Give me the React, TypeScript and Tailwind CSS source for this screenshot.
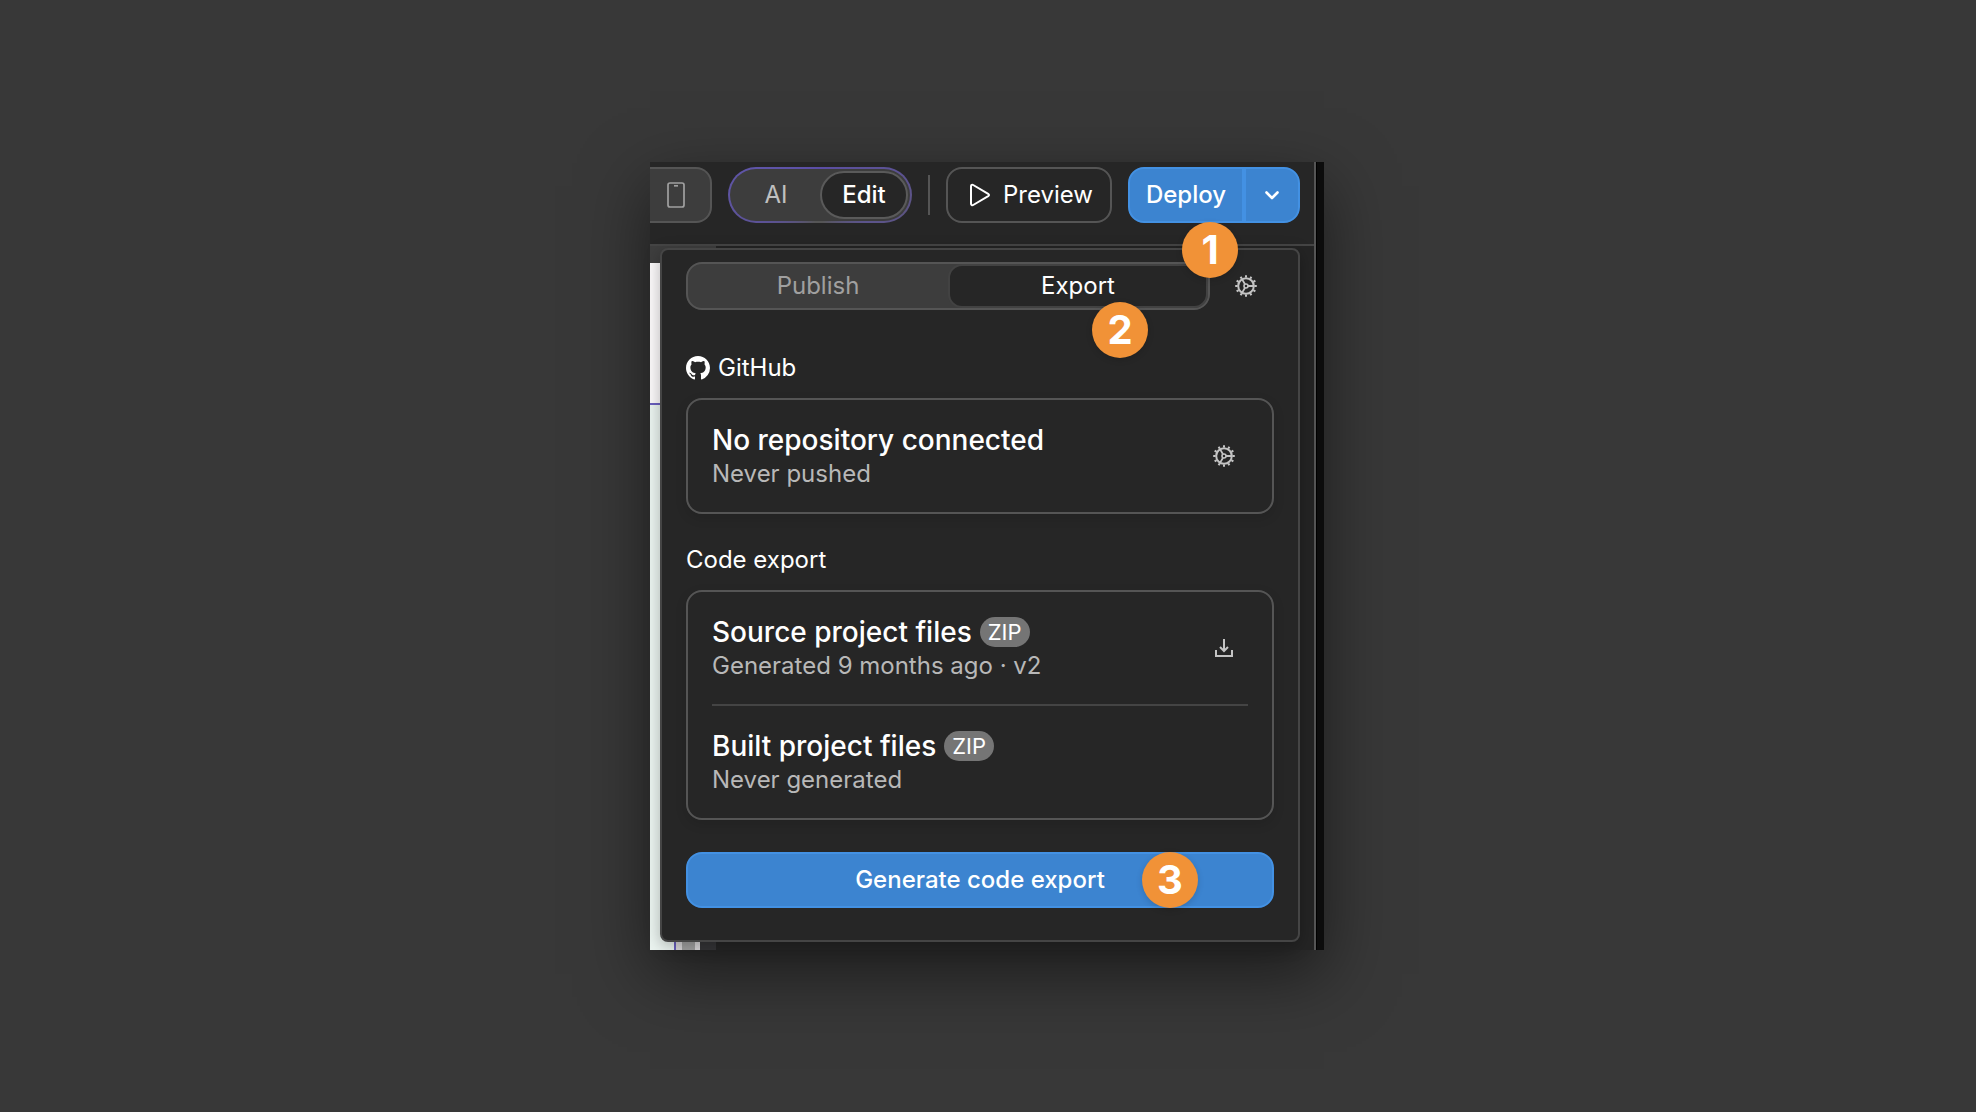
import React, { type ReactNode } from "react";

function GearIcon() {
  const teeth = [0, 30, 60, 90, 120, 150, 180, 210, 240, 270, 300, 330];
  return (
    <svg viewBox="0 0 22 22" className="size-[22px]" fill="none" stroke="currentColor" strokeWidth="2" aria-hidden="true">
      <circle cx="11" cy="11" r="7.8" />
      <circle cx="11" cy="11" r="2" strokeWidth="1.6" />
      <path d="M13 11H19M10 9.3L7 4.1M10 12.7L7 17.9" strokeWidth="1.8" />
      {teeth.map((angle) => (
        <path key={angle} d="M11 0.2V2.6" strokeWidth="2" transform={`rotate(${angle} 11 11)`} />
      ))}
    </svg>
  );
}

function DownloadIcon() {
  return (
    <svg viewBox="0 0 18 18" className="size-[18px]" fill="none" stroke="currentColor" strokeWidth="2" aria-hidden="true">
      <path d="M1 11V17H17V11" />
      <path d="M9 0V12M5 8L9 12L13 8" />
    </svg>
  );
}

function PhoneIcon() {
  return (
    <svg viewBox="0 0 18 26" className="h-[26px] w-[18px]" fill="none" stroke="currentColor" strokeWidth="1.7" aria-hidden="true">
      <rect x="1" y="1" width="16" height="24" rx="2" />
      <path d="M7 3.8H11" />
    </svg>
  );
}

function PlayIcon() {
  return (
    <svg viewBox="0 0 22 24" className="h-6 w-[22px]" fill="none" stroke="currentColor" strokeWidth="2" strokeLinejoin="round" aria-hidden="true">
      <path d="M2 3.2C2 1.9 3.2 1.4 4.2 2L19.2 10.8C20.3 11.5 20.3 12.5 19.2 13.2L4.2 22C3.2 22.6 2 22.1 2 20.8Z" />
    </svg>
  );
}

function ChevronIcon() {
  return (
    <svg viewBox="0 0 14 9" className="h-[9px] w-[14px]" fill="none" stroke="currentColor" strokeWidth="2.6" strokeLinecap="round" strokeLinejoin="round" aria-hidden="true">
      <path d="M1.5 1.5L7 7L12.5 1.5" />
    </svg>
  );
}

function GitHubIcon() {
  return (
    <svg viewBox="0 0 16 16" className="size-6" fill="currentColor" aria-hidden="true">
      <path d="M8 0C3.58 0 0 3.58 0 8c0 3.54 2.29 6.53 5.47 7.59.4.07.55-.17.55-.38 0-.19-.01-.82-.01-1.49-2.01.37-2.53-.49-2.69-.94-.09-.23-.48-.94-.82-1.13-.28-.15-.68-.52-.01-.53.63-.01 1.08.58 1.23.82.72 1.21 1.87.87 2.33.66.07-.52.28-.87.51-1.07-1.78-.2-3.64-.89-3.64-3.95 0-.87.31-1.59.82-2.15-.08-.2-.36-1.02.08-2.12 0 0 .67-.21 2.2.82.64-.18 1.32-.27 2-.27s1.36.09 2 .27c1.53-1.04 2.2-.82 2.2-.82.44 1.1.16 1.92.08 2.12.51.56.82 1.27.82 2.15 0 3.07-1.87 3.75-3.65 3.95.29.25.54.73.54 1.48 0 1.07-.01 1.93-.01 2.2 0 .21.15.46.55.38A8.01 8.01 0 0 0 16 8c0-4.42-3.58-8-8-8Z" />
    </svg>
  );
}

function StepBadge({ step, className }: { step: number; className: string }) {
  return (
    <span
      className={`absolute z-10 flex size-14 items-center justify-center rounded-full bg-[#f19237] text-[40px] leading-none font-bold text-white shadow-[0_2px_6px_rgba(0,0,0,0.15)] ${className}`}
    >
      {step}
    </span>
  );
}

function Toolbar() {
  return (
    <header className="flex items-start gap-4 border-b-2 border-[#454545] bg-[#262626] pt-[5px] pr-3.5 pb-[21px]">
      <button
        type="button"
        aria-label="Phone view"
        className="flex h-14 w-[62px] items-center rounded-r-2xl border-2 border-l-0 border-[#555] bg-[#3d3d3d] pl-[17px] text-[#a0a0a0]"
      >
        <PhoneIcon />
      </button>

      <div className="grid h-14 w-[184px] grid-cols-2 rounded-full border-2 border-transparent p-0.5 [background:linear-gradient(#3d3d3d,#3d3d3d)_padding-box,conic-gradient(#5b4da6,#5c5296_70deg,#5c5482_100deg,#5c548c_120deg,#555_175deg,#555_190deg,#5c5296_245deg,#5f55a8_290deg,#5b4da6)_border-box]">
        <button type="button" className="rounded-full text-[#c0c0c0]">AI</button>
        <button type="button" className="rounded-full border-2 border-[#5a5a5a] bg-[#262626] font-medium text-white">
          Edit
        </button>
      </div>

      <span className="mt-2 h-10 w-0.5 bg-[#555]" />

      <button
        type="button"
        className="flex h-14 w-[166px] items-center justify-center gap-3 rounded-2xl border-2 border-[#555] pl-1 text-white"
      >
        <PlayIcon />
        Preview
      </button>

      <div className="relative flex h-14 flex-1">
        <button
          type="button"
          className="flex-1 rounded-l-2xl border-2 border-[#4391e3] bg-[#3c84d0] font-medium text-white"
        >
          Deploy
        </button>
        <button
          type="button"
          aria-label="Deploy options"
          className="flex w-14 items-center justify-center rounded-r-2xl border-2 border-[#4391e3] bg-[#3c84d0] text-white"
        >
          <ChevronIcon />
        </button>
        <StepBadge step={1} className="top-[55px] left-[54px]" />
      </div>
    </header>
  );
}

function CanvasBackdrop() {
  return (
    <div className="absolute inset-0 flex flex-col bg-[#242424]" aria-hidden="true">
      <div className="h-[17px] w-[66px] bg-[#3e3e3e]" />
      <div className="h-[140px] w-[66px] bg-[#fbf9fa]" />
      <div className="h-0.5 w-[66px] bg-[#6a5fbe]" />
      <div className="flex w-[66px] flex-1 bg-[#ebf4f0]">
        <span className="w-6" />
        <span className="w-0.5 bg-[#6a5fbe]" />
        <span className="w-1.5 bg-[#d8d6d8]" />
        <span className="w-[13px] bg-[#a0a0a0]" />
        <span className="w-[5px] bg-[#d8d6d8]" />
        <span className="flex-1 bg-[#343436]" />
      </div>
    </div>
  );
}

function Card({ children }: { children: ReactNode }) {
  return (
    <div className="mt-3.5 rounded-2xl border-2 border-[#555] px-6 shadow-[0_4px_12px_rgba(0,0,0,0.12)]">{children}</div>
  );
}

function Row({
  title,
  detail,
  zip,
  action,
}: {
  title: string;
  detail: string;
  zip?: boolean;
  action?: ReactNode;
}) {
  return (
    <div className="flex h-28 items-center justify-between">
      <div>
        <h3 className="flex items-center gap-2 text-[28px] leading-9 font-medium text-white">
          {title}
          {zip && (
            <span className="rounded-full bg-[#757575] px-2 text-[22px] leading-[30px] font-normal">ZIP</span>
          )}
        </h3>
        <p className="text-[#b8b8b8]">{detail}</p>
      </div>
      {action}
    </div>
  );
}

function IconButton({ label, children }: { label: string; children: ReactNode }) {
  return (
    <button type="button" aria-label={label} className="flex size-12 items-center justify-center text-[#c4c4c4]">
      {children}
    </button>
  );
}

function ExportPopover() {
  return (
    <section className="relative mt-0.5 mr-3.5 mb-2 ml-2.5 rounded-lg border-2 border-[#454545] bg-[#262626] px-6 pt-3 pb-8 shadow-[0_4px_16px_rgba(0,0,0,0.28)]">
      <div className="flex items-center gap-3">
        <div className="relative grid h-12 flex-1 grid-cols-2 rounded-2xl border-2 border-[#555] bg-[#3d3d3d]">
          <button type="button" className="text-[#a0a0a0]">Publish</button>
          <button type="button" className="rounded-[14px] border-2 border-[#424242] bg-[#262626] text-white">
            Export
          </button>
          <StepBadge step={2} className="top-[38px] right-[60px]" />
        </div>
        <div className="mr-1">
          <IconButton label="Deploy settings">
            <GearIcon />
          </IconButton>
        </div>
      </div>

      <h2 className="mt-[42px] flex items-center gap-2 text-white">
        <GitHubIcon />
        GitHub
      </h2>
      <Card>
        <Row
          title="No repository connected"
          detail="Never pushed"
          action={
            <IconButton label="Repository settings">
              <GearIcon />
            </IconButton>
          }
        />
      </Card>

      <h2 className="mt-[30px] text-white">Code export</h2>
      <Card>
        <Row
          title="Source project files"
          detail="Generated 9 months ago · v2"
          zip
          action={
            <IconButton label="Download source">
              <DownloadIcon />
            </IconButton>
          }
        />
        <hr className="border-t-2 border-[#444]" />
        <Row title="Built project files" detail="Never generated" zip />
      </Card>

      <div className="relative mt-8">
        <button
          type="button"
          className="h-14 w-full rounded-2xl border-2 border-[#4391e3] bg-[#3c84d0] font-medium text-white"
        >
          Generate code export
        </button>
        <StepBadge step={3} className="top-0 right-[76px]" />
      </div>
    </section>
  );
}

export default function App() {
  return (
    <main className="flex min-h-screen items-center justify-center bg-[#383838] pr-0.5 font-['Inter',sans-serif] text-2xl leading-8">
      <div className="flex w-full max-w-[674px] bg-[#0c0c0c] shadow-[0_24px_64px_rgba(0,0,0,0.5)]">
        <div className="min-w-0 flex-1 border-r-2 border-[#555]">
          <Toolbar />
          <div className="relative flow-root">
            <CanvasBackdrop />
            <ExportPopover />
          </div>
        </div>
        <div className="w-2 border-l border-black" />
      </div>
    </main>
  );
}
